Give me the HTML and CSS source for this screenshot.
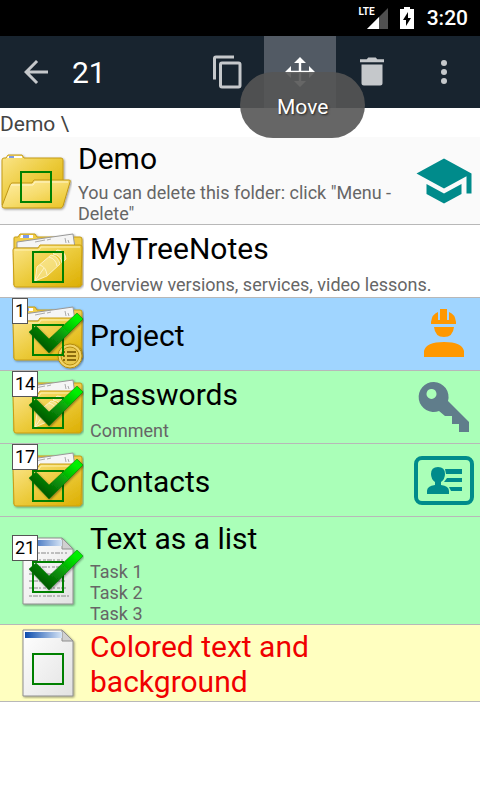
FILE: index.html
```html
<!DOCTYPE html>
<html lang="en">
<head>
    <meta charset="UTF-8">
    <meta name="viewport" content="width=device-width, initial-scale=1.0">
    <title>MyTreeNotes</title>
    <link rel="stylesheet" href="styles.css">
</head>
<body>
    <!-- shared drawings -->
    <svg class="defs" width="0" height="0" aria-hidden="true">
        <defs>
            <linearGradient id="gold" x1="0" y1="0" x2="1" y2="1">
                <stop offset="0" stop-color="#fbe58a"/>
                <stop offset="0.5" stop-color="#eccb3c"/>
                <stop offset="1" stop-color="#dcae00"/>
            </linearGradient>
            <linearGradient id="goldLight" x1="0" y1="0" x2="1" y2="1">
                <stop offset="0" stop-color="#ffefa8"/>
                <stop offset="0.5" stop-color="#f6dc6c"/>
                <stop offset="1" stop-color="#eac21c"/>
            </linearGradient>
            <linearGradient id="paper" x1="0" y1="0" x2="1" y2="1">
                <stop offset="0" stop-color="#ffffff"/>
                <stop offset="1" stop-color="#e2e2e2"/>
            </linearGradient>
            <linearGradient id="blue" x1="0" y1="0" x2="1" y2="0">
                <stop offset="0" stop-color="#0c4cae"/>
                <stop offset="1" stop-color="#d6e4f5"/>
            </linearGradient>
            <linearGradient id="green" x1="0" y1="1" x2="1" y2="0">
                <stop offset="0.2" stop-color="#005a00"/>
                <stop offset="0.5" stop-color="#0a920a"/>
                <stop offset="0.85" stop-color="#00f000"/>
            </linearGradient>
            <filter id="shadow" x="-10%" y="-10%" width="120%" height="130%">
                <feDropShadow dx="1" dy="1" stdDeviation="1" flood-color="#000" flood-opacity="0.4"/>
            </filter>
            <symbol id="folder" viewBox="0 0 72 72">
                <g filter="url(#shadow)">
                    <path d="M2 60V13q0-1 1-1h3l2-3h15l2 3h43q2 0 2 2v46z" fill="#f0cd48" stroke="#c69c17"/>
                    <path d="M9 10h12v3H8z" fill="#fff"/>
                    <path d="M11 10h6v3h-6z" fill="#7b9be8"/>
                    <path d="M5 17l56-8 2 14H5z" fill="#f5f5f5" stroke="#999"/>
                    <path d="M23 17l10-2M35 15l4-1M53 13l1 5M56 15l1 3" stroke="#aaa" fill="none"/>
                    <path d="M1 25q0-2 2-2h23l2-3h40q2 0 2 2l-1 38q0 2-2 2H4q-2 0-2-2z" fill="url(#gold)" stroke="#c99d12"/>
                    <path d="M3 25h24l2-3h39" stroke="#fff2b4" fill="none"/>
                </g>
            </symbol>
            <symbol id="pencil" viewBox="0 0 72 72">
                <g fill="#fff3bc" fill-opacity="0.5" stroke="#fff8d8" stroke-opacity="0.8">
                    <path d="M23 56l2-14 14-12q7 1 9 9L35 51z"/>
                    <path d="M41 29l4-4q8 0 9 9l-4 4q-1-8-9-9z"/>
                    <path d="M23 56l9-13M28 40q6 2 7 10M37 32q7 2 8 9" fill="none"/>
                </g>
            </symbol>
            <symbol id="doc" viewBox="0 0 72 72">
                <g filter="url(#shadow)">
                    <path d="M11 3h39l11 11v55H11z" fill="url(#paper)" stroke="#8e8e8e"/>
                    <path d="M50 3v11h11z" fill="#d0d0d0" stroke="#8e8e8e" stroke-linejoin="round"/>
                    <path d="M13 5h37v6H13z" fill="url(#blue)"/>
                </g>
            </symbol>
            <symbol id="check" viewBox="0 0 72 72">
                <path d="M17 34l7-6 13 13L65 15l6 6-34 34z" fill="url(#green)" stroke="#087508" stroke-width="0.5" filter="url(#shadow)"/>
            </symbol>
        </defs>
    </svg>

    <div class="status-bar">
        <span class="lte">LTE</span>
        <svg class="signal" width="21" height="21" viewBox="0 0 21 21" aria-hidden="true">
            <path d="M0 21L21 0v21z" fill="#505050"/>
            <path d="M0 21L12 9v12z" fill="#fff"/>
        </svg>
        <svg class="battery" width="14" height="22" viewBox="0 0 14 22" aria-hidden="true">
            <path d="M4 0h6v2h4v20H0V2h4z" fill="#fff"/>
            <path d="M8 5L3 13h3v6l5-8H8z" fill="#000"/>
        </svg>
        <span class="clock">3:20</span>
    </div>

    <header class="toolbar">
        <button type="button" class="tool" aria-label="Back">
            <svg width="36" height="36" viewBox="0 0 24 24"><path d="M20 11H7.8l5.6-5.6L12 4l-8 8 8 8 1.400-1.400L7.800 13H20z"/></svg>
        </button>
        <h1 class="count">21</h1>
        <button type="button" class="tool" aria-label="Copy">
            <svg width="36" height="36" viewBox="0 0 24 24"><path d="M16 1H4a2 2 0 0 0-2 2v14h2V3h12zm3 4H8a2 2 0 0 0-2 2v14a2 2 0 0 0 2 2h11a2 2 0 0 0 2-2V7a2 2 0 0 0-2-2zm0 16H8V7h11z"/></svg>
        </button>
        <button type="button" class="tool pressed" aria-label="Move">
            <svg width="36" height="36" viewBox="0 0 24 24"><path d="M12 2l4 4h-3.200v5.200H18V8l4 4-4 4v-3.200h-5.200V18H16l-4 4-4-4h3.200v-5.200H6V16l-4-4 4-4v3.200h5.200V6H8z"/></svg>
            <span class="toast" role="tooltip">Move</span>
        </button>
        <button type="button" class="tool" aria-label="Delete">
            <svg width="36" height="36" viewBox="0 0 24 24"><path d="M5 19.500c0 1 .8 1.500 1.500 1.500h11c.8 0 1.500-.6 1.500-1.500V7H5zM20 3.500h-4.500L14.500 2.300h-5L8.500 3.500H4v2h16z"/></svg>
        </button>
        <button type="button" class="tool" aria-label="More">
            <svg width="36" height="36" viewBox="0 0 24 24"><circle cx="12" cy="6" r="2"/><circle cx="12" cy="12" r="2"/><circle cx="12" cy="18" r="2"/></svg>
        </button>
    </header>

    <div class="path">Demo \</div>

    <main class="list">
        <div class="row parent">
            <div class="icon">
                <svg width="72" height="72" viewBox="0 0 72 72">
                    <g filter="url(#shadow)">
                        <path d="M2 60V15q0-2 2-2h2l2-3h14l2 3h37q2 0 2 2v45z" fill="url(#gold)" stroke="#c69c17"/>
                        <path d="M8 11h14v2H7z" fill="#fff"/>
                        <path d="M9 11h5v2H9z" fill="#7b9be8"/>
                        <path d="M2 61l8-21q1-2 2-2h20l2-3h35q2 0 1 2l-7 24q-1 2-2 2H4q-2 0-2-2z" fill="url(#goldLight)" stroke="#c09717"/>
                        <path d="M11 40h22l2-3h33" stroke="#fff6cc" fill="none"/>
                    </g>
                </svg>
                <input type="checkbox" class="box" id="n0">
            </div>
            <label class="text" for="n0">
                <span class="title">Demo</span>
                <span class="note">You can delete this folder: click "Menu - Delete"</span>
            </label>
            <svg class="mark" width="60" height="60" viewBox="0 0 24 24" fill="#008b8b"><path d="M5 13.200v4L12 21l7-3.800v-4L12 17zM12 3L1 9l11 6 9-4.900V17h2V9z"/></svg>
        </div>

        <div class="row">
            <div class="icon">
                <svg width="72" height="72"><use href="#folder"/><use href="#pencil"/></svg>
                <input type="checkbox" class="box" id="n1">
            </div>
            <label class="text" for="n1">
                <span class="title">MyTreeNotes</span>
                <span class="note">Overview versions, services, video lessons.</span>
            </label>
        </div>

        <div class="row current">
            <div class="icon">
                <svg width="72" height="72">
                    <use href="#folder"/>
                    <g filter="url(#shadow)">
                        <circle cx="58" cy="58" r="12" fill="#f1d468" stroke="#b58c10"/>
                        <circle cx="58" cy="58" r="9" fill="#e9c84e" stroke="#b58c10"/>
                        <path d="M55 54h9M55 58h9M55 62h9M51 54h2M51 58h2M51 62h2" stroke="#8a6a0c" stroke-width="2"/>
                    </g>
                </svg>
                <input type="checkbox" class="box" id="n2" checked>
                <svg class="check" width="72" height="72"><use href="#check"/></svg>
                <span class="badge">1</span>
            </div>
            <label class="text" for="n2">
                <span class="title">Project</span>
            </label>
            <svg class="mark" width="60" height="60" viewBox="0 0 60 60" fill="#ff9800">
                <path d="M17 20v-2q1-8 7-10v8h2V5h7v11h2V8q6 2 7 10v2zM20 23h20q-1 10-10 10T20 23zM10 53v-6q2-9 20-9t20 9v6z"/>
            </svg>
        </div>

        <div class="row selected">
            <div class="icon">
                <svg width="72" height="72"><use href="#folder"/><use href="#pencil"/></svg>
                <input type="checkbox" class="box" id="n3" checked>
                <svg class="check" width="72" height="72"><use href="#check"/></svg>
                <span class="badge">14</span>
            </div>
            <label class="text" for="n3">
                <span class="title">Passwords</span>
                <span class="note">Comment</span>
            </label>
            <svg class="mark" width="60" height="60" viewBox="0 0 60 60" fill="#607d8b">
                <path fill-rule="evenodd" d="M20 5a15 15 0 1 0 5 29l6 5h7v8h7v8h10V45L34 24A15 15 0 0 0 20 5zm-2 7a5 5 0 1 1-1 0z"/>
            </svg>
        </div>

        <div class="row selected">
            <div class="icon">
                <svg width="72" height="72"><use href="#folder"/></svg>
                <input type="checkbox" class="box" id="n4" checked>
                <svg class="check" width="72" height="72"><use href="#check"/></svg>
                <span class="badge">17</span>
            </div>
            <label class="text" for="n4">
                <span class="title">Contacts</span>
            </label>
            <svg class="mark" width="60" height="60" viewBox="0 0 60 60" fill="#008b8b">
                <rect x="2" y="8" width="56" height="45" rx="6" fill="none" stroke="#008b8b" stroke-width="4"/>
                <path d="M24 17q7 0 7 7 0 5-4 8v3q8 1 8 6v3H13v-3q0-5 8-6v-3q-4-3-4-8 0-7 7-7zM31 19h17v5H32zM33 28h15v4H30zM35 37h13v4H37z"/>
            </svg>
        </div>

        <div class="row selected">
            <div class="icon">
                <svg width="72" height="72">
                    <use href="#doc"/>
                    <g stroke="#888" stroke-width="1" stroke-dasharray="3 1 5 1 2 2">
                        <path d="M25 18h30M17 25h34M26 32h29M17 39h38M17 46h36M17 53h38M17 61h40"/>
                    </g>
                </svg>
                <input type="checkbox" class="box" id="n5" checked>
                <svg class="check" width="72" height="72"><use href="#check"/></svg>
                <span class="badge">21</span>
            </div>
            <label class="text" for="n5">
                <span class="title">Text as a list</span>
                <span class="note">Task 1<br>Task 2<br>Task 3</span>
            </label>
        </div>

        <div class="row colored">
            <div class="icon">
                <svg width="72" height="72"><use href="#doc"/></svg>
                <input type="checkbox" class="box" id="n6">
            </div>
            <label class="text" for="n6">
                <span class="title">Colored text and background</span>
            </label>
        </div>
    </main>
</body>
</html>
```
FILE: styles.css
```css
* {
    box-sizing: border-box;
}
body {
    margin: 0;
    font-family: Roboto, sans-serif;
    background: #fff;
    color: #000;
}
svg {
    display: block;
    flex-shrink: 0;
}
.defs {
    position: absolute;
}

/* status bar */
.status-bar {
    display: flex;
    justify-content: flex-end;
    align-items: center;
    height: 36px;
    padding-right: 12px;
    background: #000;
    color: #fff;
}
.lte {
    align-self: flex-start;
    margin-top: 6px;
    margin-right: -8px;
    font-size: 10px;
    line-height: 12px;
    font-weight: bold;
    z-index: 1;
}
.battery {
    margin: 0 13px 0 12px;
}
.clock {
    font-size: 21px;
    font-weight: 500;
}

/* toolbar */
.toolbar {
    display: flex;
    align-items: center;
    background: #18242f;
}
.tool {
    position: relative;
    display: flex;
    justify-content: center;
    align-items: center;
    width: 72px;
    height: 72px;
    padding: 0;
    border: none;
    background: none;
    color: #fff;
    font-family: inherit;
    cursor: pointer;
}
.tool svg {
    fill: #c5c8cb;
}
.pressed {
    background: #525a64;
}
.pressed svg {
    fill: #fff;
}
.count {
    flex: 1;
    margin: 0;
    font-size: 30px;
    font-weight: normal;
    color: #fff;
}
.toast {
    position: absolute;
    top: 36px;
    left: -24px;
    padding: 23px 37px 19px;
    border-radius: 33px;
    background: rgba(85, 85, 85, 0.9);
    font-size: 21px;
    line-height: 24px;
    text-shadow: 1px 1px 2px #222;
    z-index: 2;
}

.path {
    padding-top: 4px;
    font-size: 21px;
    line-height: 25px;
    color: #444;
}

/* notes */
.row {
    display: flex;
    align-items: center;
    padding: 0 6px 0 12px;
    border-bottom: 1px solid #b8b8b8;
}
.parent {
    min-height: 88px;
    padding-left: 0;
    background: #fafafa;
}
.current {
    background: #a0d5ff;
}
.selected {
    background: #aaffb8;
}
.colored {
    background: #ffffc0;
    color: #f00000;
}
.icon {
    position: relative;
    width: 72px;
    height: 72px;
    flex-shrink: 0;
}
.box {
    position: absolute;
    top: 26px;
    left: 20px;
    width: 32px;
    height: 32px;
    margin: 0;
    appearance: none;
    border: 2px solid #008000;
}
.check {
    position: absolute;
    top: 0;
    left: 0;
    pointer-events: none;
}
.badge {
    position: absolute;
    top: 0;
    left: 0;
    padding: 0 2px;
    border: 1px solid #555;
    background: #fff;
    font-size: 18px;
    line-height: 24px;
}
.text {
    flex: 1;
    display: flex;
    flex-direction: column;
    justify-content: space-evenly;
    align-self: stretch;
    padding: 4px 6px 0;
}
.title {
    margin-bottom: 2px;
    font-size: 30px;
    line-height: 35px;
}
.note {
    margin-top: 3px;
    font-size: 18px;
    line-height: 21px;
    color: #666;
}
```
